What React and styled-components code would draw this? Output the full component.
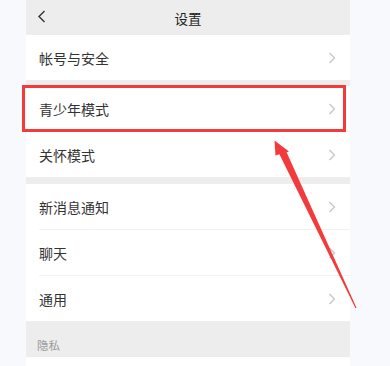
import React from 'react';
import styled, { createGlobalStyle } from 'styled-components';

const GlobalStyle = createGlobalStyle`
  html, body {
    margin: 0;
    padding: 0;
    background: #f8f9fd;
  }
  body {
    font-family: "Noto Sans CJK SC", "Noto Sans", sans-serif;
  }
`;

const Page = styled.div`
  position: relative;
  width: 390px;
  height: 366px;
  overflow: hidden;
  background: #f8f9fd;
`;

const Panel = styled.div`
  margin-left: 26px;
  width: 324px;
  height: 100%;
  background: #ededed;
  display: flex;
  flex-direction: column;
`;

const Header = styled.div`
  position: relative;
  height: 35px;
  display: flex;
  align-items: center;
  justify-content: center;
  font-size: 13.5px;
  color: #222;
  background: #ededed;
`;

const BackButton = styled.div`
  position: absolute;
  left: 11px;
  top: 10px;
  width: 10px;
  height: 13px;
  display: flex;
`;

const Group = styled.div`
  background: #fff;
  margin-bottom: ${(p) => p.gap || 0}px;
`;

const Row = styled.div`
  position: relative;
  height: 45px;
  display: flex;
  align-items: center;
  justify-content: space-between;
  padding: 0 14px 0 13px;
  font-size: 14px;
  color: #333;
  background: #fff;
  border-top: ${(p) => (p.divider ? '1px solid #f2f2f2' : 'none')};
  margin-left: ${(p) => (p.divider ? 13 : 0)}px;
  padding-left: ${(p) => (p.divider ? 0 : 13)}px;
`;

const Chevron = styled.svg`
  width: 8px;
  height: 12px;
  flex: none;
`;

const SectionTitle = styled.div`
  height: 36px;
  box-sizing: border-box;
  padding: 16px 0 0 11px;
  font-size: 11.5px;
  line-height: 16px;
  color: #999;
`;

const Filler = styled.div`
  flex: 1;
  background: #fff;
`;

const Highlight = styled.div`
  position: absolute;
  left: 22px;
  top: 85px;
  width: 324px;
  height: 47px;
  box-sizing: border-box;
  border: 3px solid #f33b3b;
`;

const Overlay = styled.svg`
  position: absolute;
  left: 0;
  top: 0;
  width: 390px;
  height: 366px;
  pointer-events: none;
`;

const Arrow = () => (
  <Chevron viewBox="0 0 8 12">
    <path d="M1.5 1 L6.5 6 L1.5 11" fill="none" stroke="#c8c8c8" strokeWidth="1.4" />
  </Chevron>
);

const groups = [
  { gap: 6, items: ['帐号与安全'] },
  { gap: 7, items: ['青少年模式', '关怀模式'] },
  { gap: 0, items: ['新消息通知', '聊天', '通用'] },
];

const App = () => {
  return (
    <Page>
      <GlobalStyle />
      <Panel>
        <Header>
          <BackButton>
            <svg width="10" height="13" viewBox="0 0 10 13">
              <path d="M7.5 1 L2 6.5 L7.5 12" fill="none" stroke="#333" strokeWidth="1.4" />
            </svg>
          </BackButton>
          设置
        </Header>
        {groups.map((g, gi) => (
          <Group key={gi} gap={g.gap}>
            {g.items.map((label, i) => (
              <Row key={label} divider={i > 0}>
                {label}
                <Arrow />
              </Row>
            ))}
          </Group>
        ))}
        <SectionTitle>隐私</SectionTitle>
        <Filler />
      </Panel>
      <Highlight />
      <Overlay viewBox="0 0 390 366">
        <polygon
          points="274.5,140.5 289,151.5 286.6,152.2 356.5,307.8 355.5,308.2 279.4,154.3 275.5,155.5"
          fill="#f33b3b"
        />
      </Overlay>
    </Page>
  );
};

export default App;
